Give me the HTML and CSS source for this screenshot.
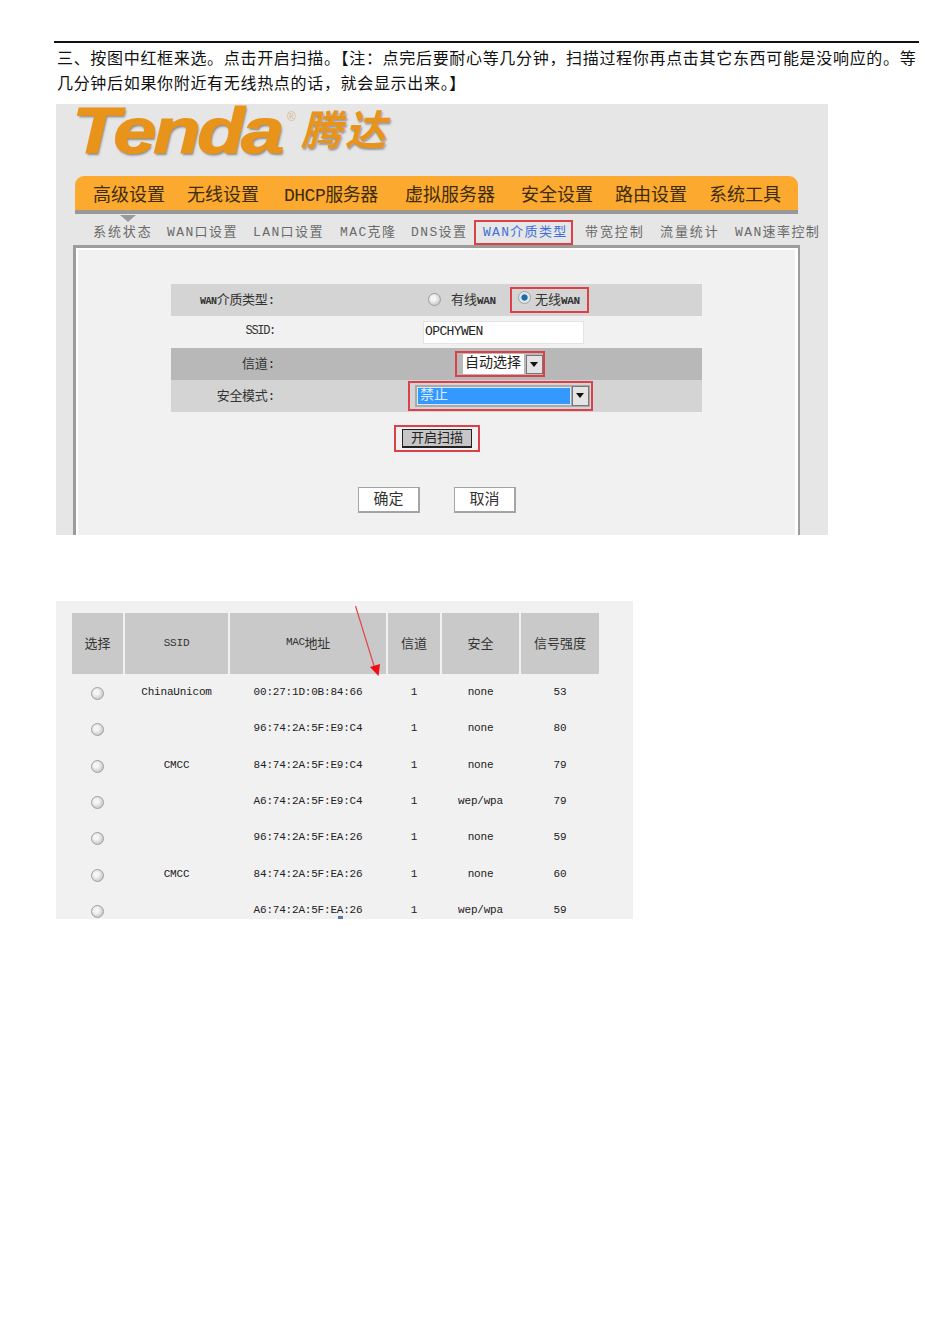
FILE: index.html
```html
<!DOCTYPE html>
<html lang="zh">
<head>
<meta charset="utf-8">
<title>Tenda</title>
<link rel="stylesheet" href="styles.css">
</head>
<body>
<main class="page">
  <p class="intro">三、按图中红框来选。点击开启扫描。【注：点完后要耐心等几分钟，扫描过程你再点击其它东西可能是没响应的。等几分钟后如果你附近有无线热点的话，就会显示出来。】</p>

  <section class="shot shot-router">
    <div class="logo">
      <span class="logo-en">Tenda</span><span class="logo-reg">®</span><span class="logo-cn">腾达</span>
    </div>
    <nav class="mainnav">
      <span>高级设置</span><span>无线设置</span><span class="nav-narrow">DHCP服务器</span><span>虚拟服务器</span><span>安全设置</span><span>路由设置</span><span>系统工具</span>
    </nav>
    <nav class="subnav">
      <span class="sub-first sub-cjk">系统状态</span><span>WAN口设置</span><span>LAN口设置</span><span>MAC克隆</span><span>DNS设置</span><span class="sub-active">WAN介质类型</span><span class="sub-cjk">带宽控制</span><span class="sub-cjk">流量统计</span><span>WAN速率控制</span>
    </nav>
    <div class="panel">
      <div class="panel-inner">
        <div class="form">
          <div class="row row-light">
            <span class="label"><span class="lat">WAN</span>介质类型:</span>
            <span class="radio radio-wired"></span>
            <span class="radio-text"><span>有线</span><span class="lat">WAN</span></span>
            <span class="redbox redbox-wan"><span class="radio radio-on"></span><span class="radio-text-on">无线<span class="lat">WAN</span></span></span>
          </div>
          <div class="row">
            <span class="label label-mono">SSID:</span>
            <span class="input">OPCHYWEN</span>
          </div>
          <div class="row row-dark">
            <span class="label">信道:</span>
            <span class="redbox redbox-channel"><span class="select-value">自动选择</span><span class="drop"></span></span>
          </div>
          <div class="row row-light">
            <span class="label">安全模式:</span>
            <span class="redbox redbox-mode"><span class="select-wide"><span class="select-blue">禁止</span><span class="drop drop-wide"></span></span></span>
          </div>
        </div>
        <div class="redbox redbox-scan"><button class="btn-scan" type="button">开启扫描</button></div>
        <div class="actions">
          <button class="btn" type="button">确定</button>
          <button class="btn" type="button">取消</button>
        </div>
      </div>
    </div>
  </section>

  <section class="shot shot-table">
    <div class="grid">
      <div class="head">选择</div><div class="head head-mono">SSID</div><div class="head head-mac"><span class="lat">MAC</span>地址</div><div class="head">信道</div><div class="head">安全</div><div class="head">信号强度</div>

      <div class="cell"><span class="radio"></span></div><div class="cell">ChinaUnicom</div><div class="cell">00:27:1D:0B:84:66</div><div class="cell">1</div><div class="cell">none</div><div class="cell">53</div>
      <div class="cell"><span class="radio"></span></div><div class="cell"></div><div class="cell">96:74:2A:5F:E9:C4</div><div class="cell">1</div><div class="cell">none</div><div class="cell">80</div>
      <div class="cell"><span class="radio"></span></div><div class="cell">CMCC</div><div class="cell">84:74:2A:5F:E9:C4</div><div class="cell">1</div><div class="cell">none</div><div class="cell">79</div>
      <div class="cell"><span class="radio"></span></div><div class="cell"></div><div class="cell">A6:74:2A:5F:E9:C4</div><div class="cell">1</div><div class="cell">wep/wpa</div><div class="cell">79</div>
      <div class="cell"><span class="radio"></span></div><div class="cell"></div><div class="cell">96:74:2A:5F:EA:26</div><div class="cell">1</div><div class="cell">none</div><div class="cell">59</div>
      <div class="cell"><span class="radio"></span></div><div class="cell">CMCC</div><div class="cell">84:74:2A:5F:EA:26</div><div class="cell">1</div><div class="cell">none</div><div class="cell">60</div>
      <div class="cell"><span class="radio"></span></div><div class="cell"></div><div class="cell">A6:74:2A:5F:EA:26</div><div class="cell">1</div><div class="cell">wep/wpa</div><div class="cell">59</div>
    </div>
    <svg class="arrow" width="330" height="80" viewBox="0 0 330 80" aria-hidden="true">
      <line x1="299.5" y1="5" x2="319" y2="68" stroke="#e2474b" stroke-width="1.2"/>
      <path d="M314 66 L324 63 L322.5 75 Z" fill="#f10d12"/>
    </svg>
    <span class="mark"></span>
  </section>
</main>
</body>
</html>
```
FILE: styles.css
```css
* { box-sizing: border-box; }
html, body { margin: 0; padding: 0; background: #fff; }
body { font-family: "Liberation Serif", "Noto Sans CJK SC", serif; color: #111; }

.page { width: 950px; min-height: 1344px; padding: 41px 31px 0 54px; }

.intro {
  margin: 0;
  padding: 3px 0 0 3px;
  border-top: 2px solid #111;
  font-size: 16px;
  line-height: 25px;
  letter-spacing: 0.68px;
}

.shot { position: relative; margin-left: 2px; }
.shot-router { width: 772px; height: 431px; margin-top: 8px; background: #e6e6e6; }
.shot-table { width: 577px; height: 318px; margin-top: 66px; background: #f1f1f1; padding: 12px 0 0 16px; overflow: hidden; }

.lat { font-family: "Liberation Mono", monospace; font-size: 11px; font-weight: 700; letter-spacing: -0.4px; }

/* logo */
.logo { display: flex; align-items: flex-start; height: 72px; padding-left: 16px; color: #e8931a; }
.logo-en {
  font: italic 700 65px/1 "Liberation Sans", sans-serif;
  -webkit-text-stroke: 1px #e8931a;
  letter-spacing: -3px;
  margin-top: -6px;
  width: 208px;
  transform: scaleX(1.2);
  transform-origin: left center;
  text-shadow: 1px 2px 2px #8a8a8a;
}
.logo-reg { font: 12px/1 "Liberation Sans", sans-serif; color: #d9b98a; margin: 7px 0 0 7px; width: 13px; }
.logo-cn {
  font: italic 700 41px/1 "Noto Sans CJK SC", sans-serif;
  margin: 3px 0 0 1px;
  letter-spacing: 3px;
  text-shadow: 1px 2px 2px #999;
}

/* main nav */
.mainnav {
  display: grid;
  grid-template-columns: 94px 97px 121px 116px 94px 94px auto;
  align-items: center;
  width: 723px;
  height: 38px;
  margin-left: 19px;
  padding: 0 0 0 18px;
  background: #fca92f;
  border-bottom: 4px solid #989898;
  border-radius: 9px 9px 0 0;
  font-family: "Liberation Mono", "Noto Sans CJK SC", monospace;
  font-size: 18px;
  color: #3d2c0d;
}
.nav-narrow { letter-spacing: -0.5px; }

/* sub nav */
.subnav {
  display: grid;
  grid-template-columns: 74px 86px 87px 71px 63px 111px 75px 75px auto;
  height: 31px;
  margin-left: 37px;
  padding-top: 6px;
  font-family: "Liberation Mono", "Noto Sans CJK SC", monospace;
  font-size: 13px;
  line-height: 25px;
  letter-spacing: 1.4px;
  color: #6a6a6a;
  white-space: nowrap;
}
.sub-cjk { letter-spacing: 1.9px; }
.sub-first { position: relative; }
.sub-first::before {
  content: "";
  position: absolute;
  left: 27px;
  top: -5px;
  border-left: 8px solid transparent;
  border-right: 8px solid transparent;
  border-top: 7px solid #9a9a9a;
}
.sub-active {
  width: 99px;
  height: 25px;
  padding-left: 7px;
  line-height: 21px;
  letter-spacing: 1.3px;
  border: 2px solid #dc4048;
  color: #3f6fd8;
}

/* panel */
.panel {
  width: 727px;
  height: 290px;
  margin-left: 17px;
  border: solid #9c9c9c;
  border-width: 3px 2px 0 3px;
}
.panel-inner {
  height: 100%;
  padding-top: 34px;
  background: #f1f1f1;
  border: solid #fff;
  border-width: 2px 3px 0 2px;
}

/* form */
.form {
  width: 531px;
  margin-left: 93px;
  font-family: "Liberation Mono", "Noto Sans CJK SC", monospace;
  font-size: 13px;
  color: #333;
}
.row { display: flex; align-items: center; height: 32px; }
.row-light { background: #d4d4d4; }
.row-dark { background: #b8b8b8; }
.label { width: 104px; padding-bottom: 4px; text-align: right; white-space: nowrap; flex: none; letter-spacing: -0.3px; }
.label .lat { font-size: 10px; }
.label-mono { font-size: 12px; letter-spacing: -1.3px; padding-bottom: 2px; }

.radio {
  display: inline-block;
  flex: none;
  width: 13px;
  height: 13px;
  border-radius: 50%;
  border: 1px solid #a0a0a0;
  background: radial-gradient(circle at 40% 40%, #f5f5f5 0 25%, #c4c4c4 80%);
}
.radio-wired { margin-left: 153px; margin-top: -2px; }
.radio-text { margin-left: 10px; padding-bottom: 4px; display: inline-flex; align-items: baseline; width: 59px; white-space: nowrap; }
.radio-on { background: radial-gradient(circle, #1c6ea8 0 35%, #d8e2e8 45%, #f5f5f5 100%); margin: -5px 4px 0 4px; }
.radio-text-on { white-space: nowrap; padding-bottom: 4px; }

.redbox { display: inline-flex; align-items: center; border: 2px solid #dc4048; flex: none; }
.redbox-wan { width: 79px; height: 26px; padding-left: 2px; }
.redbox-channel { width: 90px; height: 26px; margin-left: 180px; padding-left: 6px; }
.redbox-mode { width: 185px; height: 30px; margin-left: 133px; padding-left: 5px; }

.input {
  display: block;
  width: 161px;
  height: 23px;
  margin-left: 148px;
  padding-left: 1px;
  background: #fff;
  border: 1px solid #e4e4e4;
  font-size: 13px;
  line-height: 19px;
  letter-spacing: -0.6px;
  color: #222;
}

.select-value {
  width: 62px;
  height: 20px;
  background: #fff;
  font-size: 14px;
  line-height: 18px;
  padding-left: 2px;
  color: #222;
  white-space: nowrap;
}
.drop {
  position: relative;
  display: block;
  flex: none;
  width: 17px;
  height: 19px;
  margin-left: 2px;
  background: #e4e4e4;
  border: 1px solid #777;
}
.drop::after {
  content: "";
  position: absolute;
  left: 3px;
  top: 6px;
  border-left: 4px solid transparent;
  border-right: 4px solid transparent;
  border-top: 5px solid #111;
}
.select-wide { display: flex; align-items: center; width: 175px; height: 22px; padding: 1px; background: #a9a9a9; }
.select-blue {
  flex: 1;
  height: 18px;
  margin-left: 1px;
  padding-left: 2px;
  background: #3399ff;
  border: 1px solid #d8e8f8;
  color: #dcecff;
  font-size: 14px;
  line-height: 14px;
}
.drop-wide { margin-left: 1px; height: 20px; }

/* buttons */
.redbox-scan {
  display: flex;
  justify-content: center;
  width: 86px;
  height: 27px;
  margin: 13px 0 0 316px;
}
.btn-scan {
  width: 70px;
  height: 19px;
  padding: 0 0 2px;
  background: #c6c6c6;
  border: 1px solid #222;
  border-width: 1px 1px 2px 1px;
  font: 13px/14px "Noto Sans CJK SC", sans-serif;
  color: #222;
}
.actions { display: flex; gap: 34px; margin: 35px 0 0 280px; }
.btn {
  width: 62px;
  height: 26px;
  padding: 0 0 3px;
  background: #fff;
  border: solid #a5a5a5;
  border-width: 1px 2px 2px 1px;
  font: 15px/18px "Noto Sans CJK SC", sans-serif;
  color: #333;
}

/* scan table */
.grid {
  display: grid;
  grid-template-columns: 51px 103px 156px 52px 77px 78px;
  grid-template-rows: 61px;
  grid-auto-rows: 36.3px;
  column-gap: 2px;
  font-family: "Liberation Mono", "Noto Sans CJK SC", monospace;
  font-size: 11px;
  color: #222;
}
.head {
  display: flex;
  align-items: center;
  justify-content: center;
  padding-bottom: 3px;
  background: #c9c9c9;
  font-size: 13px;
  color: #333;
}
.head-mono { font-size: 11px; letter-spacing: -0.2px; padding-bottom: 2px; }
.head-mac { font-size: 13px; letter-spacing: -0.3px; }
.head-mac .lat { font-weight: 400; font-size: 11px; }
.cell { display: flex; align-items: center; justify-content: center; letter-spacing: -0.2px; white-space: nowrap; }
.cell .radio { margin-top: 3px; }

.arrow { position: absolute; left: 0; top: 0; }
.mark { position: absolute; left: 282px; top: 315px; width: 5px; height: 3px; background: #5577aa; }
```
